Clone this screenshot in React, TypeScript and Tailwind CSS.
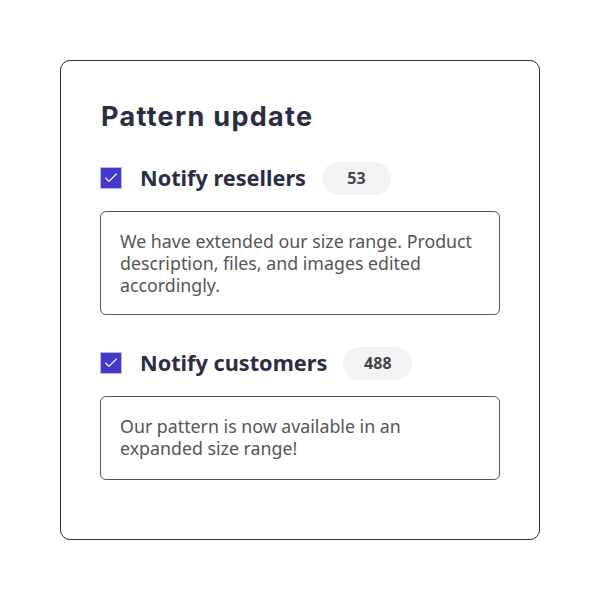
import { Check } from "lucide-react";

type Group = { label: string; count: number; message: string; height: string };

const groups: Group[] = [
  {
    label: "Notify resellers",
    count: 53,
    message: "We have extended our size range. Product description, files, and images edited accordingly.",
    height: "h-[104px]",
  },
  {
    label: "Notify customers",
    count: 488,
    message: "Our pattern is now available in an expanded size range!",
    height: "h-[84px]",
  },
];

function CheckBox() {
  return (
    <span className="flex h-5 w-5 items-center justify-center bg-[#4338ca] ring-1 ring-[#b9b6f0]">
      <Check className="h-4 w-4 text-white" strokeWidth={1.75} />
    </span>
  );
}

export default function App() {
  return (
    <div className="min-h-[600px] w-[600px] bg-white pt-[60px] font-['Noto_Sans',sans-serif]">
      <div className="mx-auto h-[480px] w-[480px] rounded-[10px] border border-[#2b2d42] px-[39px] pt-[40px]">
        <h2 className="pl-px font-['Inter',sans-serif] text-[27px] font-bold leading-8 tracking-[1.3px] text-[#2b2d42]">
          Pattern update
        </h2>

        {groups.map((g, i) => (
          <div key={g.label} className={i === 0 ? "mt-[28px]" : "mt-[31px]"}>
            <div className="flex h-[34px] items-center pl-px">
              <CheckBox />
              <span className="ml-[19px] text-[21.7px] font-bold text-[#2b2d42]">{g.label}</span>
              <span className="ml-4 flex h-[33px] w-[69px] items-center justify-center rounded-full bg-[#f3f3f5] text-[16px] font-bold text-[#444]">
                {g.count}
              </span>
            </div>
            <div
              className={`mt-4 ${g.height} rounded-md border border-[#555] px-[19px] pt-[18px] text-[17.8px] leading-[22px] text-[#555]`}
            >
              {g.message}
            </div>
          </div>
        ))}
      </div>
    </div>
  );
}
